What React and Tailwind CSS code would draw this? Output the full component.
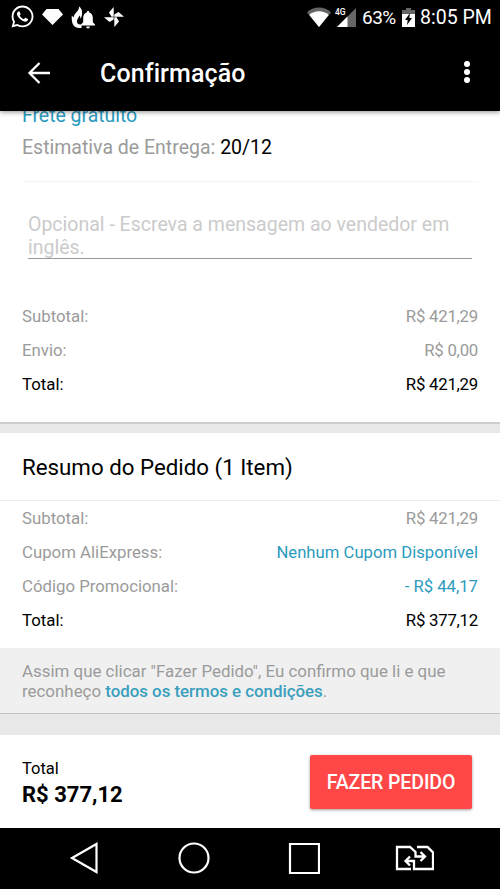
import React from "react";
import { FaWhatsapp } from "react-icons/fa";

const orderRows = [
  { label: 'Subtotal:', value: 'R$ 421,29' },
  { label: 'Envio:', value: 'R$ 0,00' },
  { label: 'Total:', value: 'R$ 421,29', total: true },
];

const summaryRows = [
  { label: 'Subtotal:', value: 'R$ 421,29' },
  { label: 'Cupom AliExpress:', value: 'Nenhum Cupom Disponível', link: true },
  { label: 'Código Promocional:', value: '- R$ 44,17', link: true },
  { label: 'Total:', value: 'R$ 377,12', total: true },
];

function StatusBar() {
  return (
    <div className="flex h-9 items-center bg-black pb-[3px] pl-[10px] pr-2 text-white">
      <FaWhatsapp className="size-[25px] shrink-0" />
      <svg className="ml-[6px] h-6 w-[23px] shrink-0" viewBox="0 0 23 24" fill="#fff">
        <path d="M5.500 4h12l4.500 5.500-10.500 10.500L1 9.500z" />
      </svg>
      <svg className="ml-[7px] h-[26px] w-6 shrink-0" viewBox="0 0 24 26" fill="#fff">
        <path d="M8 2.500C8.500 7 3.500 8.500 2.500 13.500L.8 11.500C.3 19 2 24 8.500 24h2v-3.500C7.500 21 5.500 19.500 6 16.500c.3-2 2-3 2.500-5 .8 1 1 2 .8 3.500 1.500-2 2-5 1.700-8C10.500 5 9.500 3.500 8 2.500z" />
        <path d="M17 7c-.8 0-1.300.6-1.300 1.400-2.400.7-3.500 2.800-3.500 5.300v4.500L10 20.500v1h14v-1l-2.200-2.300v-4.500c0-2.500-1.100-4.600-3.500-5.300C18.300 7.600 17.800 7 17 7zM15.200 22.400h3.600c0 1.200-.8 2-1.800 2s-1.800-.8-1.800-2z" />
      </svg>
      <svg className="ml-2 size-[22px] shrink-0" viewBox="0 0 22 22" fill="#fff">
        <path d="M10.700 1v9.700H8.500L6 6.500zM21 10.700h-9.700V8.500L15.500 6zM11.300 21v-9.700h2.200l2.500 4.200zM1 11.300h9.700v2.200L6.500 16z" />
      </svg>
      <div className="flex-1" />
      <svg className="h-[22px] w-6 shrink-0" viewBox="0 0 24 22">
        <path d="M0 6.500C6-.2 18-.2 24 6.500L12 21z" fill="#666" />
        <path d="M2.300 9c5-5 14.400-5 19.400 0L12 21z" fill="#fff" />
      </svg>
      <svg className="ml-[4px] h-[22px] w-[22px] shrink-0" viewBox="0 0 22 22">
        <path d="M21 2v19H2z" fill="#666" />
        <path d="M12.500 10.500V21H2z" fill="#fff" />
        <text x="0" y="9" fontSize="8.500" fontWeight="500" fontFamily="Roboto, sans-serif" fill="#fff">4G</text>
      </svg>
      <span className="ml-[5px] w-[35px] whitespace-nowrap pt-[2px] text-[19px] leading-[34px] tracking-[-0.500px]">63%</span>
      <svg className="ml-[5px] h-[22px] w-[13px] shrink-0" viewBox="0 0 13 22">
        <path d="M4 2h5v2h4v4H0V4h4z" fill="#666" />
        <path d="M0 8h13v13H0z" fill="#fff" />
        <path d="M8 7 3 14h2.700L5 19l5-7H7.300z" fill="#000" />
      </svg>
      <span className="ml-[5px] w-[72px] whitespace-nowrap pt-[3px] text-[19.500px] leading-[34px]">8:05 PM</span>
    </div>
  );
}

function AppBar() {
  return (
    <div className="relative z-10 flex h-[75px] items-center bg-black pl-[27px] pr-[21px] text-white shadow-[0_1px_5px_rgba(0,0,0,0.45)]">
      <svg className="mb-[2px] size-6 shrink-0" viewBox="0 0 24 24" fill="none" stroke="#fff" strokeWidth="2.300">
        <path d="M23 12H3M12.500 2 2.500 12l10 10" />
      </svg>
      <h1 className="ml-[49px] flex-1 text-[25px] font-medium tracking-[0.100px]">Confirmação</h1>
      <div className="mb-[3px] flex w-6 flex-col items-center gap-[2px]">
        <i className="size-[6px] rounded-full bg-white" />
        <i className="size-[6px] rounded-full bg-white" />
        <i className="size-[6px] rounded-full bg-white" />
      </div>
    </div>
  );
}

function PriceRow({ label, value, total, link }) {
  return (
    <div className={`flex h-[34px] items-center justify-between text-[16.800px] ${total ? 'text-black' : 'text-[#9b9b9b]'}`}>
      <span>{label}</span>
      <span className={link ? 'text-[16.700px] text-[#2b9bbd]' : 'text-[16.800px] tracking-[-0.250px]'}>{value}</span>
    </div>
  );
}

function NavBar() {
  return (
    <div className="flex h-[61px] items-center bg-black pb-px pl-[69px]">
      <svg className="h-8 w-[30px]" viewBox="0 0 30 32" fill="none" stroke="#fff" strokeWidth="2.200">
        <path d="M27.500 2v28L3 16z" />
      </svg>
      <svg className="ml-[79px] size-8" viewBox="0 0 32 32" fill="none" stroke="#fff" strokeWidth="2.200">
        <circle cx="16" cy="16" r="14.500" />
      </svg>
      <svg className="ml-[78px] size-8" viewBox="0 0 32 32" fill="none" stroke="#fff" strokeWidth="2.200">
        <path d="M2 2h29v29H2z" />
      </svg>
      <svg className="ml-[75px] h-[26px] w-[39px]" viewBox="0 0 39 26" fill="none" stroke="#fff" strokeWidth="2.300">
        <path d="M16 24H2V2h13l5.500 5v4.500h9M25.500 7l4.500 4.500-4.500 4.500" />
        <path d="M22 2h10.500l5.500 5.500V24H19v-8h-8.500M15 11.500 10.500 16l4.500 4.500" />
      </svg>
    </div>
  );
}

export default function App() {
  return (
    <div className="flex h-[889px] w-[500px] flex-col overflow-hidden bg-white font-['Roboto',sans-serif] text-black">
      <StatusBar />
      <AppBar />

      <div className="h-[311px] overflow-hidden px-[22px]">
        <div className="-mt-[8px] h-[26px] text-[19.500px] leading-[26px] tracking-[-0.050px] text-[#2b9bbd]">Frete gratuito</div>
        <div className="mt-[6px] h-[26px] text-[19.500px] leading-[26px] text-[#9b9b9b]">
          Estimativa de Entrega: <span className="text-black">20/12</span>
        </div>
        <div className="mt-[20px] border-t border-[#f5f5f5]" />
        <div className="mx-[6px] mt-[30px] h-[47px] border-b border-[#999] pt-px text-[19.500px] leading-[23px] text-[#cbcbcb]">
          Opcional - Escreva a mensagem ao vendedor em inglês.
        </div>
        <div className="mt-[41px]">
          {orderRows.map((row) => (
            <PriceRow key={row.label} {...row} />
          ))}
        </div>
      </div>

      <div className="h-[11px] border-t-2 border-[#cdcdcd] bg-[#e8e8e8]" />

      <div className="h-[215px]">
        <h2 className="h-[68px] border-b border-[#ececec] px-[22px] text-[22.300px] leading-[68px]">
          Resumo do Pedido (1 Item)
        </h2>
        <div className="px-[22px] pt-[1px]">
          {summaryRows.map((row) => (
            <PriceRow key={row.label} {...row} />
          ))}
        </div>
      </div>

      <div className="h-[65px] bg-[#f0f0f0] px-[22px] pt-[14px] text-[16.900px] leading-[19.500px] text-[#9b9b9b]">
        Assim que clicar "Fazer Pedido", Eu confirmo que li e que
        <br />
        reconheço <span className="font-medium tracking-[-0.030px] text-[#3a9fbd]">todos os termos e condições</span>.
      </div>
      <div className="h-[22px] border-t border-[#c3c3c3] bg-[#e8e8e8]" />

      <div className="flex h-[93px] items-center justify-between pl-[22px] pr-7">
        <div>
          <div className="text-[16.500px] leading-[26px]">Total</div>
          <div className="text-[22px] font-bold leading-[26px]">R$ 377,12</div>
        </div>
        <button className="h-[54px] w-[162px] whitespace-nowrap rounded-[2px] bg-[#ff4747] pt-[3px] text-[19.500px] font-medium tracking-[-0.100px] text-white shadow-[0_1px_3px_rgba(0,0,0,0.400)]">
          FAZER PEDIDO
        </button>
      </div>

      <NavBar />
    </div>
  );
}
